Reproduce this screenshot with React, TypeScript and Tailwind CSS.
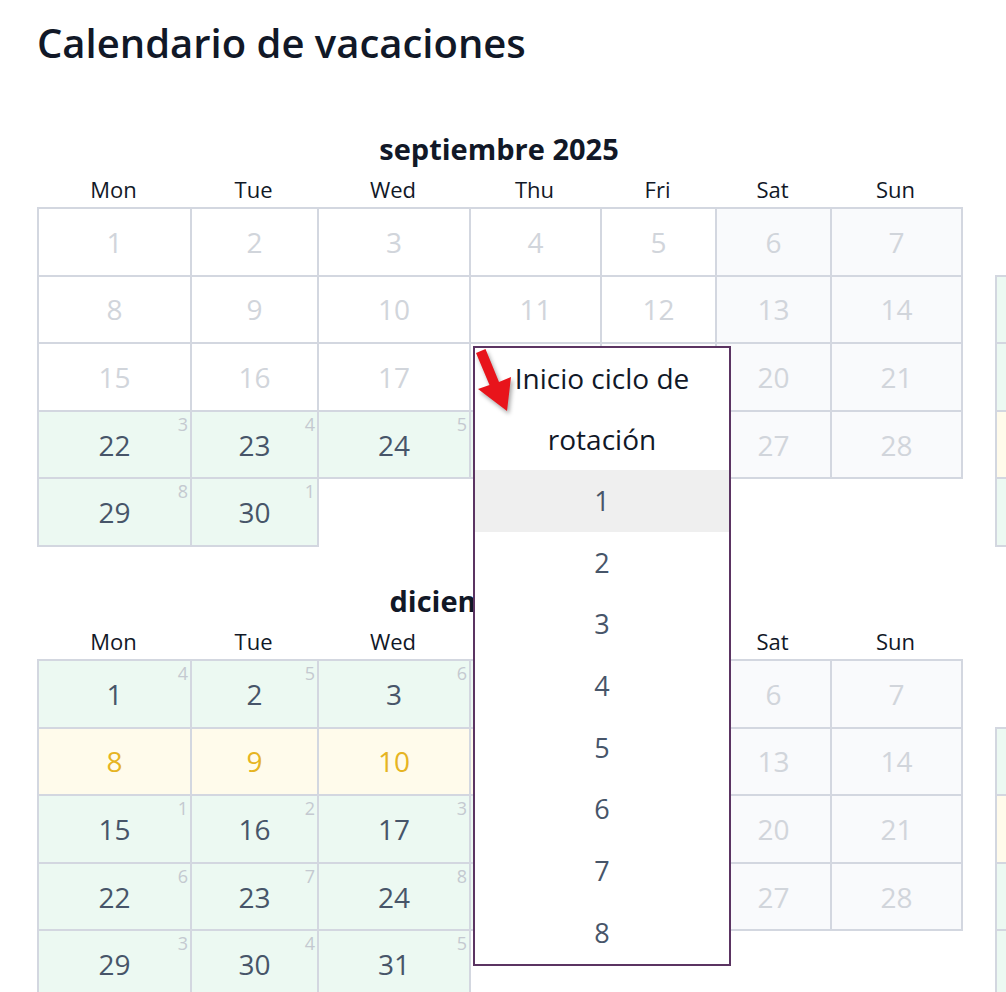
type DayKind = 'past' | 'work' | 'hol' | 'weekend';

interface MonthDef {
  title: string;
  offset: number;
  days: number;
  pastUntil: number;
  holidays: number[];
  cycleStart: number;
}

const months: MonthDef[] = [
  { title: 'septiembre 2025', offset: 0, days: 30, pastUntil: 21, holidays: [], cycleStart: 3 },
  { title: 'octubre 2025', offset: 2, days: 31, pastUntil: 0, holidays: [20, 21, 22, 23, 24], cycleStart: 2 },
  { title: 'noviembre 2025', offset: 5, days: 30, pastUntil: 0, holidays: [10, 11, 12, 13, 14], cycleStart: 7 },
  { title: 'diciembre 2025', offset: 0, days: 31, pastUntil: 0, holidays: [8, 9, 10, 11, 12], cycleStart: 4 },
  { title: 'enero 2026', offset: 3, days: 31, pastUntil: 0, holidays: [12, 13, 14, 15, 16], cycleStart: 6 },
  { title: 'febrero 2026', offset: 6, days: 28, pastUntil: 0, holidays: [], cycleStart: 1 },
];

const weekdays = ['Mon', 'Tue', 'Wed', 'Thu', 'Fri', 'Sat', 'Sun'];

function buildCells(m: MonthDef) {
  const cells: ({ day: number; kind: DayKind; cycle?: number } | null)[] = [];
  for (let i = 0; i < m.offset; i++) cells.push(null);
  let cycle = m.cycleStart;
  for (let d = 1; d <= m.days; d++) {
    const col = (m.offset + d - 1) % 7;
    if (col >= 5) {
      cells.push({ day: d, kind: 'weekend' });
    } else if (d <= m.pastUntil) {
      cells.push({ day: d, kind: 'past' });
    } else if (m.holidays.includes(d)) {
      cells.push({ day: d, kind: 'hol' });
    } else {
      cells.push({ day: d, kind: 'work', cycle });
      cycle = cycle === 8 ? 1 : cycle + 1;
    }
  }
  return cells;
}

function Month({ month }: { month: MonthDef }) {
  const cells = buildCells(month);
  return (
    <div className="w-[924px]">
      <div className="h-[36px] text-center text-[29px] font-bold leading-[36px] text-[#111827]">{month.title}</div>
      <div className="grid h-[40px] grid-cols-[153px_127px_152px_131px_115px_115px_131px] pt-[3px]">
        {weekdays.map((w) => (
          <div key={w} className="text-center text-[22px] leading-[38px] text-[#111827]">
            {w}
          </div>
        ))}
      </div>
      <div className="grid grid-cols-[153px_127px_152px_131px_115px_115px_131px] auto-rows-[67.6px]">
        {cells.map((c, i) => {
          if (!c) return <div key={'e' + i} />;
          const bg =
            c.kind === 'work'
              ? 'bg-[#ecf9f2] text-[#475569]'
              : c.kind === 'hol'
              ? 'bg-[#fffbeb] text-[#e6b422]'
              : c.kind === 'weekend'
              ? 'bg-[#f9fafc] text-[#d1d5db]'
              : 'bg-white text-[#d1d5db]';
          return (
            <div
              key={c.day}
              className={`relative -mr-[2px] -mb-[2px] flex items-center justify-center border-2 border-[#d3d7e0] text-[28px] ${bg}`}
            >
              {c.day}
              {c.cycle !== undefined && (
                <span className="absolute top-[2px] right-[2px] text-[18px] leading-[20px] text-[#c4c9d0]">{c.cycle}</span>
              )}
            </div>
          );
        })}
      </div>
    </div>
  );
}

export default function App() {
  const options = [1, 2, 3, 4, 5, 6, 7, 8];
  return (
    <div className="relative h-screen w-screen overflow-hidden bg-white font-['Open_Sans',sans-serif]">
      <div className="pl-[37px] pt-[21px]">
        <h1 className="text-[40px] font-semibold leading-[44px] text-[#111827]">Calendario de vacaciones</h1>
        <div className="mt-[66px] grid grid-cols-[924px_924px_924px] gap-x-[34px] gap-y-[38px]">
          {months.map((m) => (
            <Month key={m.title} month={m} />
          ))}
        </div>
      </div>

      {/* rotation start dropdown */}
      <div className="absolute left-[473px] top-[346px] w-[258px] border-2 border-[#5b3462] bg-white">
        <div className="text-center text-[28px] leading-[61px] text-[#111827]">
          Inicio ciclo de
          <br />
          rotación
        </div>
        {options.map((o) => (
          <div
            key={o}
            className={`h-[61.7px] text-center text-[27px] leading-[61.7px] text-[#475569] ${o === 1 ? 'bg-[#efefef]' : ''}`}
          >
            {o}
          </div>
        ))}
      </div>

      <svg
        className="absolute left-[470px] top-[345px] h-[70px] w-[50px] drop-shadow-[2px_3px_2px_rgba(0,0,0,0.35)]"
        viewBox="0 0 50 70"
      >
        <polygon points="15.5,4 29,37 41,32 37,66 8,44 19.5,40 6,8" fill="#e8141b" />
      </svg>
    </div>
  );
}
